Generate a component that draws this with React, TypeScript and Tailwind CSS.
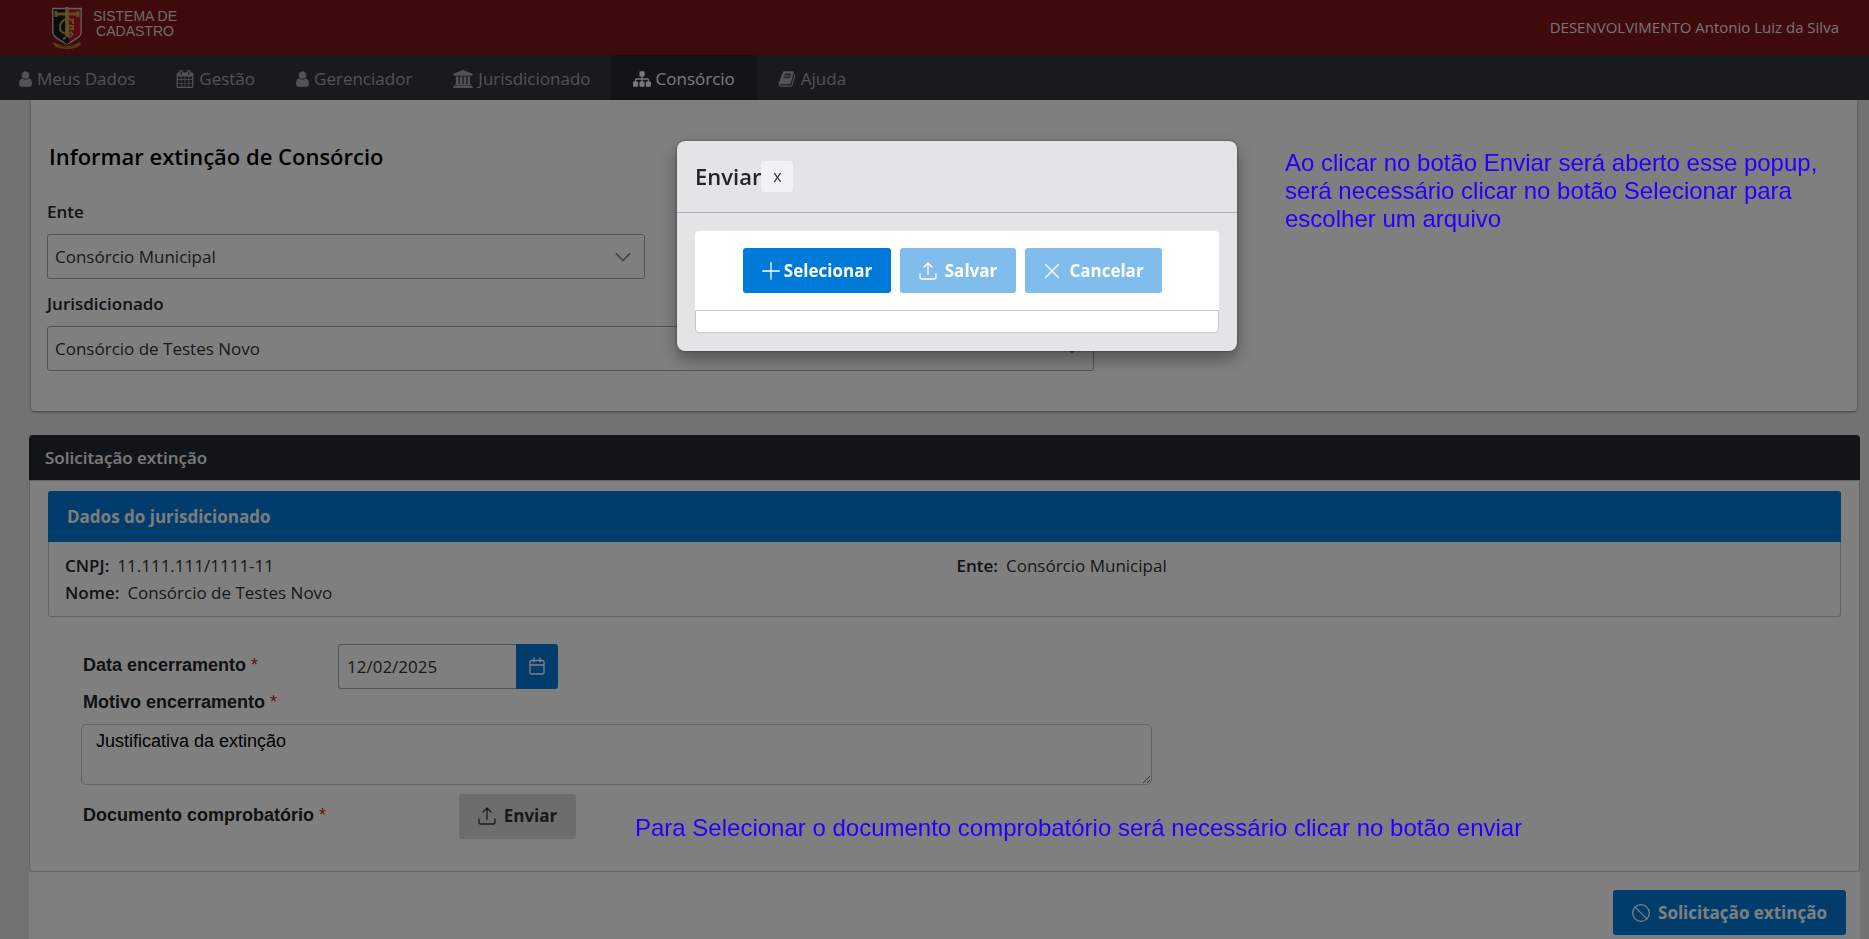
import { useState } from "react";
import type { ReactNode } from "react";

const userPath =
  "M1536 1399q0 109-62.5 187t-150.5 78h-854q-88 0-150.5-78t-62.5-187q0-85 8.5-160.5t31.5-152 58.5-131 94-89 134.5-34.5q131 128 313 128t313-128q76 0 134.5 34.5t94 89 58.5 131 31.5 152 8.5 160.5zm-256-887q0 159-112.5 271.5t-271.5 112.5-271.5-112.5-112.5-271.5 112.5-271.5 271.5-112.5 271.5 112.5 112.5 271.5z";

const navItems = [
  {
    label: "Meus Dados",
    box: "256 0 1280 1792",
    size: "w-[13px]",
    path: userPath,
  },
  {
    label: "Gestão",
    box: "0 0 1792 1792",
    size: "w-[18px]",
    path: "M192 1664h288v-288h-288v288zm352 0h320v-288h-320v288zm-352-352h288v-320h-288v320zm352 0h320v-320h-320v320zm-352-384h288v-288h-288v288zm736 736h320v-288h-320v288zm-384-736h320v-288h-320v288zm768 736h288v-288h-288v288zm-384-352h320v-320h-320v320zm-352-864v-288q0-13-9.5-22.5t-22.5-9.5h-64q-13 0-22.5 9.5t-9.5 22.5v288q0 13 9.5 22.5t22.5 9.5h64q13 0 22.5-9.5t9.5-22.5zm736 864h288v-320h-288v320zm-384-384h320v-288h-320v288zm384 0h288v-288h-288v288zm32-480v-288q0-13-9.5-22.5t-22.5-9.5h-64q-13 0-22.5 9.5t-9.5 22.5v288q0 13 9.5 22.5t22.5 9.5h64q13 0 22.5-9.5t9.5-22.5zm384-64v1280q0 52-38 90t-90 38h-1408q-52 0-90-38t-38-90v-1280q0-52 38-90t90-38h128v-96q0-66 47-113t113-47h64q66 0 113 47t47 113v96h384v-96q0-66 47-113t113-47h64q66 0 113 47t47 113v96h128q52 0 90 38t38 90z",
  },
  {
    label: "Gerenciador",
    box: "256 0 1280 1792",
    size: "w-[13px]",
    path: userPath,
  },
  {
    label: "Jurisdicionado",
    box: "0 0 1920 1792",
    size: "w-[20px]",
    path: "M960 0l960 384v128h-128q0 26-20.5 45t-48.5 19h-1526q-28 0-48.5-19t-20.5-45h-128v-128zm-704 640h256v768h128v-768h256v768h128v-768h256v768h128v-768h256v768h59q28 0 48.5 19t20.5 45v64h-1664v-64q0-26 20.5-45t48.5-19h59v-768zm1595 960q28 0 48.5 19t20.5 45v128h-1920v-128q0-26 20.5-45t48.5-19h1782z",
  },
  {
    label: "Consórcio",
    box: "0 0 1792 1792",
    size: "w-[18px]",
    active: true,
    path: "M1792 1248v320q0 40-28 68t-68 28h-320q-40 0-68-28t-28-68v-320q0-40 28-68t68-28h96v-192h-512v192h96q40 0 68 28t28 68v320q0 40-28 68t-68 28h-320q-40 0-68-28t-28-68v-320q0-40 28-68t68-28h96v-192h-512v192h96q40 0 68 28t28 68v320q0 40-28 68t-68 28h-320q-40 0-68-28t-28-68v-320q0-40 28-68t68-28h96v-192q0-52 38-90t90-38h512v-192h-96q-40 0-68-28t-28-68v-320q0-40 28-68t68-28h320q40 0 68 28t28 68v320q0 40-28 68t-68 28h-96v192h512q52 0 90 38t38 90v192h96q40 0 68 28t28 68z",
  },
  {
    label: "Ajuda",
    box: "0 0 1792 1792",
    size: "w-[18px]",
    path: "M1703 478q40 57 18 129l-275 906q-19 64-76.5 107.5t-122.5 43.5h-923q-77 0-148.5-53.5t-99.5-131.5q-24-67-2-127 0-4 3-27t4-37q1-8-3-21.5t-3-19.5q2-11 8-21t16.5-23.5 16.5-23.5q23-38 45-91.5t30-91.5q3-10 .5-30t-.5-28q3-11 17-28t17-23q21-36 42-92t25-90q1-9-2.5-32t.5-28q4-13 22-30.5t22-22.5q19-26 42.5-84.5t27.5-96.5q1-8-3-25.5t-2-26.5q2-8 9-18t18-23 17-21q8-12 16.5-30.5t15-35 16-36 19.5-32 26.5-23.5 36-11.5 47.5 5.5l-1 3q38-9 51-9h761q74 0 114 56t18 130l-274 906q-36 119-71.5 153.5t-128.5 34.5h-869q-27 0-38 15-11 16-1 43 24 70 144 70h923q29 0 56-15.5t35-41.5l300-987q7-22 5-57 38 15 59 43zm-1064 2q-4 13 2 22.5t20 9.5h608q13 0 25.5-9.5t16.5-22.5l21-64q4-13-2-22.5t-20-9.5h-608q-13 0-25.5 9.5t-16.5 22.5zm-83 256q-4 13 2 22.5t20 9.5h608q13 0 25.5-9.5t16.5-22.5l21-64q4-13-2-22.5t-20-9.5h-608q-13 0-25.5 9.5t-16.5 22.5z",
  },
];

function Crest() {
  return (
    <svg width="30" height="44" viewBox="0 0 30 44" aria-hidden="true">
      <path d="M0.8 2.5h28.4v24c0 5-8 8-14.2 11.5C8.8 34.5.8 31.5.8 26.5z" fill="#17181c" />
      <path d="M15 2.5h14.2v24c0 5-8 8-14.2 11.5z" fill="#b5182c" />
      <path d="M0.8 2.5h28.4v24c0 5-8 8-14.2 11.5C8.8 34.5.8 31.5.8 26.5z" fill="none" stroke="#c9c5c5" strokeWidth="1.3" />
      <path d="M4 5v6M26 5v6M4 8h22" fill="none" stroke="#b99a3c" strokeWidth="3" />
      <path d="M15 1v29" stroke="#c9aa45" strokeWidth="3.5" />
      <path d="M21 15q-5-4-9-1t-4 7q0 5 4 6 4 1 8-1M21 13v5" fill="none" stroke="#b99a3c" strokeWidth="2" />
      <path d="M15 20h6v3h-4M21 27q-1 4-6 4l-4 2" fill="none" stroke="#b99a3c" strokeWidth="2" />
      <path d="M12 36l3-6 3 6-3 2z" fill="#17181c" />
      <path d="M2 36q13 8 26 0l1 2-3 3q-11 4-22 0l-3-3z" fill="#a8832c" />
      <path d="M7 40q8 3 16 0" fill="none" stroke="#7a5a1a" strokeWidth="1" />
    </svg>
  );
}

function LineIcon({ children, size = 18, width = 1.3 }: { children: ReactNode; size?: number; width?: number }) {
  return (
    <svg
      width={size}
      height={size}
      viewBox="0 0 18 18"
      fill="none"
      stroke="currentColor"
      strokeWidth={width}
      strokeLinecap="round"
      strokeLinejoin="round"
      className="shrink-0"
      aria-hidden="true"
    >
      {children}
    </svg>
  );
}

function UploadIcon() {
  return (
    <LineIcon>
      <path d="M9 12.5V1M5 5l4-4 4 4M1 12v3.5q0 1.5 1.5 1.5h13q1.5 0 1.5-1.5V12" />
    </LineIcon>
  );
}

interface SelectFieldProps {
  id: string;
  label: string;
  value: string;
  className: string;
}

function SelectField({ id, label, value, className }: SelectFieldProps) {
  return (
    <div>
      <label htmlFor={id} className="block h-[47px] pt-3.5 leading-[22px] font-semibold text-[#212529]">
        {label}
      </label>
      <div className={`grid max-w-full items-center ${className}`}>
        <select
          id={id}
          className="col-start-1 row-start-1 h-[45px] w-full appearance-none rounded-[3px] border border-[#a6a6a6] bg-white px-[7px] text-[#333333]"
        >
          <option>{value}</option>
        </select>
        <span className="pointer-events-none col-start-1 row-start-1 justify-self-end pr-3.5 text-[#848484]">
          <LineIcon size={16} width={1.8}>
            <path d="M1.5 5.5L9 13l7.5-7.5" />
          </LineIcon>
        </span>
      </div>
    </div>
  );
}

function Required() {
  return <span className="ml-[5px] font-normal text-[#dc2020]">*</span>;
}

function UploadDialog({ onClose }: { onClose: () => void }) {
  return (
    <div className="fixed inset-x-0 top-[141px] z-20 flex justify-center pl-[45px]">
      <div
        role="dialog"
        aria-labelledby="dialog-title"
        className="w-[560px] rounded-lg bg-[#e3e4e6] shadow-[0_8px_16px_rgba(0,0,0,0.35),0_0_2px_rgba(0,0,0,0.6)]"
      >
        <div className="flex h-[72px] items-center border-b border-[#a0b7c3] px-[18px]">
          <h2 id="dialog-title" className="text-[22px] font-semibold text-[#212529]">
            Enviar
          </h2>
          <button onClick={onClose} className="h-[31px] w-8 rounded bg-[#f1f2f4] pb-0.5 text-base text-[#333333]">
            x
          </button>
        </div>
        <div className="p-[18px]">
          <div className="flex h-[79px] items-center justify-center gap-[9px] rounded-t bg-white pr-[9px]">
            <button className="flex h-[45px] w-[148px] items-center justify-center gap-1 rounded-[3px] bg-[#007ad9] font-bold text-white">
              <LineIcon>
                <path d="M9 0.7v16.6M0.7 9h16.6" />
              </LineIcon>
              Selecionar
            </button>
            <button
              disabled
              className="flex h-[45px] w-[116px] items-center justify-center gap-2 rounded-[3px] bg-[#80bcec] font-bold text-white"
            >
              <UploadIcon />
              Salvar
            </button>
            <button
              disabled
              className="flex h-[45px] w-[137px] items-center justify-center gap-2 rounded-[3px] bg-[#80bcec] font-bold text-white"
            >
              <LineIcon>
                <path d="M2.5 2.5l13 13M15.5 2.5l-13 13" />
              </LineIcon>
              Cancelar
            </button>
          </div>
          <div className="h-[23px] rounded-b border border-[#c8c8c8] bg-white" />
        </div>
      </div>
    </div>
  );
}

export default function App() {
  const [open, setOpen] = useState(true);
  const [date, setDate] = useState("12/02/2025");
  const [reason, setReason] = useState("Justificativa da extinção");

  return (
    <div className="flex min-h-screen flex-col bg-[#e4e4e4] font-['Open_Sans',sans-serif] text-[17px]">
      <header className="flex h-[55px] items-center justify-between bg-[#7c1518] pr-[30px] pl-[52px]">
        <div className="flex items-start gap-[11px]">
          <Crest />
          <div className="pt-[3px] text-center font-['Liberation_Sans',sans-serif] text-sm leading-[15px] text-[#e0d4d4]">
            SISTEMA DE
            <br />
            CADASTRO
          </div>
        </div>
        <span className="text-[15px] text-[#f0e4e4]">DESENVOLVIMENTO Antonio Luiz da Silva</span>
      </header>

      <nav className="flex h-[45px] bg-[#30363c]">
        {navItems.map((item, i) => (
          <a
            key={item.label}
            href="#"
            className={`flex items-center gap-[5px] pt-0.5 ${i === 0 ? "pr-5 pl-[19px]" : item.active ? "px-[22px]" : "pr-5 pl-[21px]"} ${
              item.active ? "bg-[#242b2f] text-[#f4f4f4]" : "text-[#a4a6a8]"
            }`}
          >
            <svg viewBox={item.box} className={`h-[18px] ${item.size}`} fill="currentColor" aria-hidden="true">
              <path d={item.path} />
            </svg>
            {item.label}
          </a>
        ))}
      </nav>

      <main className="flex flex-1 flex-col pr-[9px] pl-[29px]">
        <section className="relative mr-[3px] ml-0.5 h-[311px] rounded-b bg-white px-4 pt-[38px] shadow-[0_1px_3px_rgba(0,0,0,0.4)]">
          <h1 className="pl-0.5 text-[22px] leading-9 font-semibold text-black">Informar extinção de Consórcio</h1>
          <div className="mt-[13px]">
            <SelectField id="ente" label="Ente" value="Consórcio Municipal" className="w-[598px]" />
            <SelectField id="jurisdicionado" label="Jurisdicionado" value="Consórcio de Testes Novo" className="w-[1047px]" />
          </div>
          <p className="absolute top-[49px] right-[30px] z-20 w-[542px] font-['Liberation_Sans',sans-serif] text-2xl leading-7 text-[#2200ff]">
            Ao clicar no botão Enviar será aberto esse popup, será necessário clicar no botão Selecionar para escolher um arquivo
          </p>
        </section>

        <section className="mt-6">
          <h2 className="flex h-[45px] items-center rounded-t bg-[#242b2f] px-4 font-semibold text-[#f4f4f4]">
            Solicitação extinção
          </h2>
          <div className="rounded-b border border-[#c8c8c8] bg-white px-[18px] pt-2.5 pb-8">
            <div className="rounded-[3px] border border-[#c8c8c8]">
              <h3 className="-mx-px -mt-px flex h-[51px] items-center rounded-t-[3px] bg-[#007ad9] px-[19px] font-bold text-[#f8f8f8]">
                Dados do jurisdicionado
              </h3>
              <div className="grid grid-cols-2 gap-x-2 py-2.5 pl-4 leading-[27px] text-[#333333]">
                <div>
                  <b className="mr-2 font-semibold text-[#212529]">CNPJ:</b>11.111.111/1111-11
                </div>
                <div>
                  <b className="mr-2 font-semibold text-[#212529]">Ente:</b>Consórcio Municipal
                </div>
                <div>
                  <b className="mr-2 font-semibold text-[#212529]">Nome:</b>Consórcio de Testes Novo
                </div>
              </div>
            </div>

            <div className="pt-[26px] pl-[33px]">
              <div className="flex h-[46px] items-center pl-0.5">
                <label htmlFor="data" className="w-[255px] pb-0.5 font-['Liberation_Sans',sans-serif] text-lg font-bold text-[#212529]">
                  Data encerramento
                  <Required />
                </label>
                <input
                  id="data"
                  value={date}
                  onChange={(e) => setDate(e.target.value)}
                  className="h-[45px] w-[178px] rounded-l-[3px] border border-r-0 border-[#a6a6a6] bg-white px-2 text-[#333333]"
                />
                <button
                  aria-label="Abrir calendário"
                  className="flex h-[45px] w-[42px] items-center justify-center rounded-r-[3px] bg-[#007ad9] text-white"
                >
                  <LineIcon>
                    <path d="M3.5 3.5h11q1.5 0 1.5 1.5v10.5q0 1.5-1.5 1.5h-11Q2 17 2 15.5V5q0-1.5 1.5-1.5zM2 8h14M6 1v4M12 1v4" />
                  </LineIcon>
                </button>
              </div>
              <label
                htmlFor="motivo"
                className="block h-[35px] pl-0.5 font-['Liberation_Sans',sans-serif] text-lg leading-[26px] font-bold text-[#212529]"
              >
                Motivo encerramento
                <Required />
              </label>
              <textarea
                id="motivo"
                value={reason}
                onChange={(e) => setReason(e.target.value)}
                className="block h-[61px] w-[1071px] max-w-full rounded-[5px] border border-[#bcc6cc] bg-white px-3.5 py-0.5 font-['Liberation_Sans',sans-serif] text-lg text-black"
              />
              <div className="mt-2 flex h-[46px] items-center pl-0.5">
                <span className="w-[376px] pb-0.5 font-['Liberation_Sans',sans-serif] text-lg font-bold text-[#212529]">
                  Documento comprobatório
                  <Required />
                </span>
                <button
                  onClick={() => setOpen(true)}
                  className="flex h-[45px] w-[117px] items-center justify-center gap-2 rounded-[3px] bg-[#dadada] font-bold text-[#333333]"
                >
                  <UploadIcon />
                  Enviar
                </button>
                <p className="relative z-20 ml-[59px] pt-6 font-['Liberation_Sans',sans-serif] text-2xl text-[#2200ff]">
                  Para Selecionar o documento comprobatório será necessário clicar no botão enviar
                </p>
              </div>
            </div>
          </div>
        </section>

        <footer className="flex flex-1 justify-end bg-white pt-[18px] pr-3.5">
          <button className="flex h-[45px] w-[233px] items-center justify-center gap-2 rounded-[3px] bg-[#007ad9] font-bold text-white">
            <LineIcon>
              <circle cx="9" cy="9" r="8.3" />
              <path d="M3.1 3.1l11.8 11.8" />
            </LineIcon>
            Solicitação extinção
          </button>
        </footer>
      </main>

      {open && (
        <>
          <div className="fixed inset-0 z-10 bg-black/50" />
          <UploadDialog onClose={() => setOpen(false)} />
        </>
      )}
    </div>
  );
}
